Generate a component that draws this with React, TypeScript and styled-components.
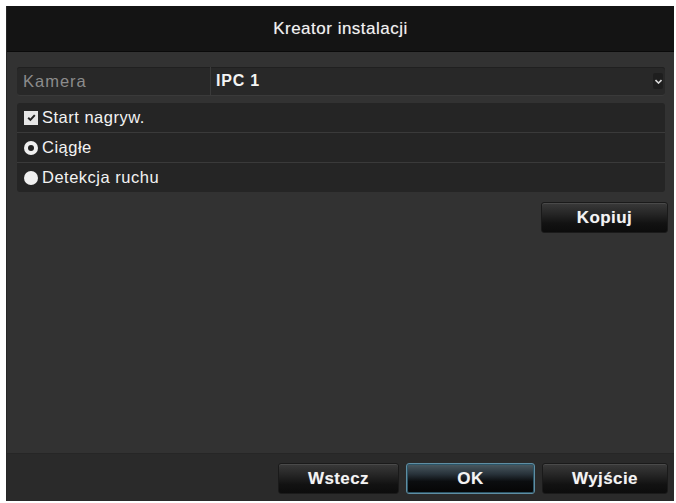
import styled, { createGlobalStyle } from "styled-components";

const GlobalStyle = createGlobalStyle`
  html, body {
    margin: 0;
    padding: 0;
    background: #ffffff;
  }
  body {
    font-family: "Liberation Sans", Arial, sans-serif;
  }
`;

const Window = styled.div`
  margin: 6px 2px 2px 6px;
  width: 668px;
  height: 495px;
  background: #323232;
  display: flex;
  flex-direction: column;
  border-left: 1px solid #262626;
  box-sizing: border-box;
`;

const TitleBar = styled.div`
  height: 46px;
  background: #141414;
  border-bottom: 1px solid #0a0a0a;
  display: flex;
  align-items: center;
  justify-content: center;
  color: #f2f2f2;
  font-size: 17px;
  letter-spacing: 0.5px;
  text-shadow: 0 0 1px rgba(255, 255, 255, 0.4);
  box-sizing: border-box;
`;

const Body = styled.div`
  flex: 1;
  padding: 15px 9px 0 10px;
  display: flex;
  flex-direction: column;
`;

const FieldRow = styled.div`
  height: 28px;
  display: flex;
  align-items: stretch;
  background: #282828;
  border-radius: 3px;
  box-shadow: inset 0 1px 0 #202020, 0 1px 0 #3a3a3a;
`;

const FieldLabel = styled.div`
  width: 194px;
  box-sizing: border-box;
  padding-left: 6px;
  display: flex;
  align-items: center;
  color: #8c8c8c;
  font-size: 16.5px;
  letter-spacing: 1px;
  border-right: 1px solid #3a3a3a;
`;

const FieldValue = styled.div`
  flex: 1;
  padding-left: 5px;
  display: flex;
  align-items: center;
  justify-content: space-between;
  color: #f4f4f4;
  font-size: 16px;
  font-weight: bold;
  letter-spacing: 0.8px;
`;

const Arrow = styled.div`
  width: 10px;
  height: 16px;
  margin-right: 2px;
  display: flex;
  align-items: center;
  justify-content: center;
  background: #1e1e1e;
  border-radius: 2px;
`;

const OptionList = styled.div`
  margin-top: 8px;
  display: flex;
  flex-direction: column;
`;

const OptionRow = styled.div`
  height: 29px;
  display: flex;
  align-items: center;
  gap: 4px;
  padding-left: 7px;
  background: #252525;
  border-top: 1px solid #3a3a3a;
  color: #f2f2f2;
  font-size: 16.5px;
  letter-spacing: 0.5px;
  &:first-child {
    border-top: none;
    border-radius: 3px 3px 0 0;
  }
  &:last-child {
    border-radius: 0 0 3px 3px;
  }
`;

const CheckBox = styled.span`
  width: 14px;
  height: 14px;
  background: #e6e6e6;
  display: flex;
  align-items: center;
  justify-content: center;
`;

const Radio = styled.span<{ $on?: boolean }>`
  width: 14px;
  height: 14px;
  border-radius: 50%;
  background: #f0f0f0;
  display: flex;
  align-items: center;
  justify-content: center;
  &::after {
    content: "";
    width: 6px;
    height: 6px;
    border-radius: 50%;
    background: ${(p) => (p.$on ? "#222" : "transparent")};
  }
`;

const CopyBar = styled.div`
  margin-top: 10px;
  margin-right: -3px;
  display: flex;
  justify-content: flex-end;
`;

const Button = styled.button<{ $w: number; $primary?: boolean }>`
  width: ${(p) => p.$w}px;
  height: 31px;
  border-radius: 3px;
  border: 1px solid ${(p) => (p.$primary ? "#5f8ea3" : "#1a1a1a")};
  background: ${(p) =>
    p.$primary
      ? "linear-gradient(#4c5b62 0%, #28323a 35%, #0b0d0f 60%, #050505 100%)"
      : "linear-gradient(#3a3a3a 0%, #242424 40%, #121212 70%, #0c0c0c 100%)"};
  box-shadow: ${(p) =>
    p.$primary ? "inset 0 0 0 1px #2c5466" : "inset 0 1px 0 #4a4a4a"};
  color: #f4f4f4;
  font-family: "Liberation Sans", Arial, sans-serif;
  font-size: 17px;
  font-weight: bold;
  letter-spacing: 0.4px;
  text-shadow: 0 0 1px rgba(255, 255, 255, 0.3);
  padding: 0;
`;

const Spacer = styled.div`
  flex: 1;
`;

const Footer = styled.div`
  height: 48px;
  background: #2a2a2a;
  border-top: 1px solid #262626;
  box-sizing: border-box;
  padding: 9px 6px 0 0;
  display: flex;
  justify-content: flex-end;
  align-items: flex-start;
  gap: 7px;
`;

function App() {
  return (
    <>
      <GlobalStyle />
      <Window>
        <TitleBar>Kreator instalacji</TitleBar>
        <Body>
          <FieldRow>
            <FieldLabel>Kamera</FieldLabel>
            <FieldValue>
              IPC 1
              <Arrow>
                <svg width="7" height="5" viewBox="0 0 7 5">
                  <path d="M0.5 1 L3.5 4 L6.5 1" fill="none" stroke="#d8d8d8" strokeWidth="1.6" />
                </svg>
              </Arrow>
            </FieldValue>
          </FieldRow>
          <OptionList>
            <OptionRow>
              <CheckBox>
                <svg width="11" height="11" viewBox="0 0 10 10">
                  <path d="M2 5.2 L4 7.2 L8 2.8" fill="none" stroke="#222" strokeWidth="1.8" />
                </svg>
              </CheckBox>
              Start nagryw.
            </OptionRow>
            <OptionRow>
              <Radio $on />
              Ciągłe
            </OptionRow>
            <OptionRow>
              <Radio />
              Detekcja ruchu
            </OptionRow>
          </OptionList>
          <CopyBar>
            <Button $w={127}>Kopiuj</Button>
          </CopyBar>
          <Spacer />
        </Body>
        <Footer>
          <Button $w={121}>Wstecz</Button>
          <Button $w={129} $primary>
            OK
          </Button>
          <Button $w={126}>Wyjście</Button>
        </Footer>
      </Window>
    </>
  );
}

export default App;
